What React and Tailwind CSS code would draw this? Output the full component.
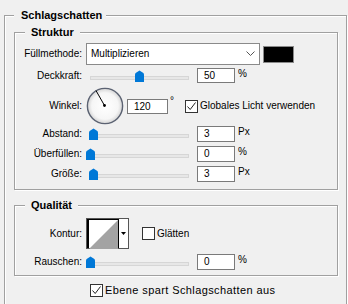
import React from "react";

function Thumb({ pos }) {
  return (
    <svg className={"absolute top-0 " + pos} width="9" height="12" viewBox="0 0 9 12">
      <path d="M0 12 L0 4.5 Q0 3.5 1 2.8 L4.5 0.5 L8 2.8 Q9 3.5 9 4.5 L9 12 Z" fill="#0078d7" />
    </svg>
  );
}

function Slider({ pos }) {
  return (
    <div className="relative ml-[4px] h-[12px] w-[105px] shrink-0">
      <div className="absolute left-[4px] right-[2px] top-[6px] h-[4px] border border-[#d6d6d6] bg-[#e7e7e7]" />
      <Thumb pos={pos} />
    </div>
  );
}

function NumBox({ value, w = "w-[38px]", h = "h-[16px]", ml = "ml-[6px]" }) {
  return (
    <div className={`${w} ${h} ${ml} shrink-0 border border-[#7a7a7a] bg-white pl-[6px] text-[10px] leading-[14px]`}>
      {value}
    </div>
  );
}

function Check({ checked }) {
  return (
    <div className="flex h-[13px] w-[13px] shrink-0 items-center justify-center border border-[#333333] bg-white">
      {checked && (
        <svg width="11" height="11" viewBox="0 0 11 11">
          <path d="M1.5 5.5 L4.2 8.5 L9.5 1.5" stroke="#222" strokeWidth="1" fill="none" />
        </svg>
      )}
    </div>
  );
}

function Label({ children }) {
  return <div className="w-[67px] shrink-0 text-right">{children}</div>;
}

function SliderRow({ label, pos, value, unit, mt, h = "h-[16px]" }) {
  return (
    <div className={`flex items-center ${mt} ${h}`}>
      <Label>{label}</Label>
      <Slider pos={pos} />
      <NumBox value={value} h={h} />
      <span className="mb-[4px] ml-[3px]">{unit}</span>
    </div>
  );
}

export default function App() {
  return (
    <div className="h-[304px] w-[348px] overflow-hidden bg-[#f0f0f0] font-['Liberation_Sans',Arial,sans-serif] text-[10px] leading-[14px] text-black">
      <fieldset className="ml-[4px] mt-[8px] h-[320px] w-[343px] border border-[#a0a0a0] shadow-[1px_1px_0_#ffffff,inset_1px_1px_0_#ffffff]">
        <legend className="ml-[9px] bg-[#f0f0f0] pl-[7px] pr-[4px] text-[11px] font-bold leading-[14px]">
          Schlagschatten
        </legend>

        {/* Struktur */}
        <fieldset className="ml-[9px] mt-[3px] w-[324px] border border-[#a0a0a0] pb-[7px] shadow-[1px_1px_0_#ffffff,inset_1px_1px_0_#ffffff]">
          <legend className="ml-[10px] bg-[#f0f0f0] pl-[6px] pr-[6px] text-[11px] font-bold leading-[14px]">
            Struktur
          </legend>

          <div className="mt-[4px] flex h-[22px] items-center">
            <Label>Füllmethode:</Label>
            <div className="ml-[4px] flex h-[22px] w-[174px] shrink-0 items-center justify-between border border-[#8a8a8a] bg-white pl-[4px] pr-[4px]">
              <span>Multiplizieren</span>
              <svg width="9" height="6" viewBox="0 0 9 6">
                <path d="M0.5 0.5 L4.5 4.5 L8.5 0.5" stroke="#555" strokeWidth="1" fill="none" />
              </svg>
            </div>
            <div className="ml-[3px] h-[17px] w-[31px] shrink-0 border border-[#8a8a8a] bg-black" />
          </div>

          <SliderRow label="Deckkraft:" pos="left-[49px]" value="50" unit="%" mt="mt-[3px]" h="h-[15px]" />

          <div className="mt-[4px] flex h-[38px] items-center">
            <Label>Winkel:</Label>
            <svg className="ml-[4px] shrink-0" width="38" height="38" viewBox="0 0 38 38">
              <defs>
                <radialGradient id="dialg" cx="50%" cy="50%" r="50%">
                  <stop offset="0%" stopColor="#ffffff" />
                  <stop offset="75%" stopColor="#f6f6f6" />
                  <stop offset="100%" stopColor="#d4d4d4" />
                </radialGradient>
              </defs>
              <circle cx="19" cy="19" r="17.6" fill="url(#dialg)" stroke="#5b6272" strokeWidth="1.4" />
              <line x1="18.5" y1="18.5" x2="10" y2="3.6" stroke="#000" strokeWidth="1" />
              <circle cx="18.5" cy="18.5" r="1.4" fill="#000" />
            </svg>
            <NumBox value="120" w="w-[41px]" h="h-[15px]" ml="ml-[3px]" />
            <span className="mb-[10px] w-[17px] shrink-0 pl-[2px]">°</span>
            <Check checked />
            <span className="ml-[2px]">Globales Licht verwenden</span>
          </div>

          <SliderRow label="Abstand:" pos="left-[3px]" value="3" unit="Px" mt="mt-[1px]" />
          <SliderRow label="Überfüllen:" pos="left-[0px]" value="0" unit="%" mt="mt-[4px]" />
          <SliderRow label="Größe:" pos="left-[3px]" value="3" unit="Px" mt="mt-[4px]" />
        </fieldset>

        {/* Qualität */}
        <fieldset className="ml-[9px] mt-[8px] w-[324px] border border-[#a0a0a0] pb-[5px] shadow-[1px_1px_0_#ffffff,inset_1px_1px_0_#ffffff]">
          <legend className="ml-[10px] bg-[#f0f0f0] pl-[6px] pr-[6px] text-[11px] font-bold leading-[14px]">
            Qualität
          </legend>

          <div className="mt-[6px] flex h-[31px] items-center">
            <Label>Kontur:</Label>
            <div className="ml-[4px] flex h-[31px] w-[43px] shrink-0 border border-[#555555] bg-white">
              <div className="h-full w-[32px] border-l-2 border-t border-r border-black">
                <svg width="30" height="29" viewBox="0 0 30 29" className="block">
                  <polygon points="0,29 29,0 29,29" fill="#a3a3a3" />
                </svg>
              </div>
              <div className="flex flex-1 items-center justify-center">
                <svg width="5" height="3" viewBox="0 0 5 3">
                  <polygon points="0,0 5,0 2.5,3" fill="#000" />
                </svg>
              </div>
            </div>
            <div className="ml-[13px]">
              <Check />
            </div>
            <span className="ml-[2px]">Glätten</span>
          </div>

          <SliderRow label="Rauschen:" pos="left-[0px]" value="0" unit="%" mt="mt-[5px]" />
        </fieldset>

        <div className="ml-[85px] mt-[7px] flex items-center">
          <Check checked />
          <span className="ml-[2px] text-[11px] tracking-[0.4px]">Ebene spart Schlagschatten aus</span>
        </div>
      </fieldset>
    </div>
  );
}
